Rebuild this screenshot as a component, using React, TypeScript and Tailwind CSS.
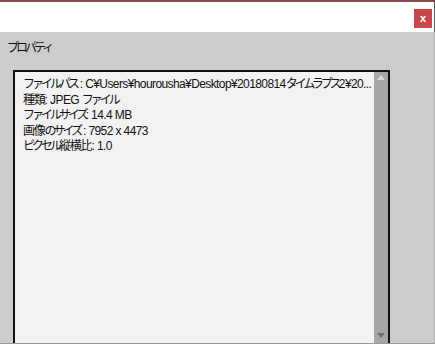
import { FC } from 'react';

const lines = [
  'ファイルパス : C¥Users¥hourousha¥Desktop¥20180814タイムラプス2¥20...',
  '種類: JPEG ファイル',
  'ファイルサイズ: 14.4 MB',
  '画像のサイズ : 7952 x 4473',
  'ピクセル縦横比: 1.0',
];

const font = { fontFamily: '"Liberation Sans", "Noto Sans CJK JP", sans-serif' };
const jpFont = { fontFamily: '"Noto Sans CJK JP", sans-serif' };

// kana / kanji runs are narrower in the original UI font, so tighten them
const Jp: FC<{ text: string }> = ({ text }) => {
  const parts = text.split(/([\u3040-\u30ff]+|[\u4e00-\u9fff]+)/).filter(Boolean);
  return (
    <>
      {parts.map((p, i) =>
        /[\u3040-\u30ff]/.test(p) ? (
          <span key={i} className="tracking-[-3px]" style={jpFont}>
            {p}
          </span>
        ) : /[\u4e00-\u9fff]/.test(p) ? (
          <span key={i} className="tracking-[-1.2px]" style={jpFont}>
            {p}
          </span>
        ) : (
          <span key={i} className="tracking-[-0.6px]">
            {p}
          </span>
        )
      )}
    </>
  );
};

const App: FC = () => {
  return (
    <div className="w-[435px] h-[344px] overflow-hidden flex flex-col bg-[#cccccc]" style={font}>
      {/* title strip */}
      <div className="h-[32px] shrink-0 bg-white border-t-2 border-[#8a4a4c] flex justify-end items-start pt-[7px] pr-[2px] border-r border-r-[#555]">
        <div className="w-[18px] h-[19px] bg-[#c9474b] flex items-center justify-center text-white text-[11px] font-bold leading-none">
          x
        </div>
      </div>

      <div className="flex-1 flex flex-col border-r border-[#b0b0b0]">
        <div className="pl-[7px] pt-[7px] h-[38px] text-[12px] leading-[16px] text-[#111]">
          <Jp text="プロパティ" />
        </div>

        <div className="flex-1 flex ml-[13px] w-[377px] border-l-2 border-t-2 border-r-2 border-[#111] bg-[#f2f2f2]">
          <div className="flex-1 min-w-0 pl-[8px] pr-[2px] pt-[3px] text-[12px] leading-[15.5px] text-[#111]">
            {lines.map((l) => (
              <div key={l} className="h-[15.5px] whitespace-nowrap">
                <Jp text={l} />
              </div>
            ))}
          </div>
          <div className="w-[14px] bg-[#a6a6a6] flex flex-col justify-between items-center py-[3px]">
            <svg width="8" height="5" viewBox="0 0 8 5">
              <path d="M0 5 L4 0 L8 5 Z" fill="#d8d8d8" />
            </svg>
            <svg width="8" height="5" viewBox="0 0 8 5" className="mb-[2px]">
              <path d="M0 0 L4 5 L8 0 Z" fill="#6e6e6e" />
            </svg>
          </div>
        </div>
        <div className="h-px bg-[#9a9a9a]" />
      </div>
    </div>
  );
};

export default App;
